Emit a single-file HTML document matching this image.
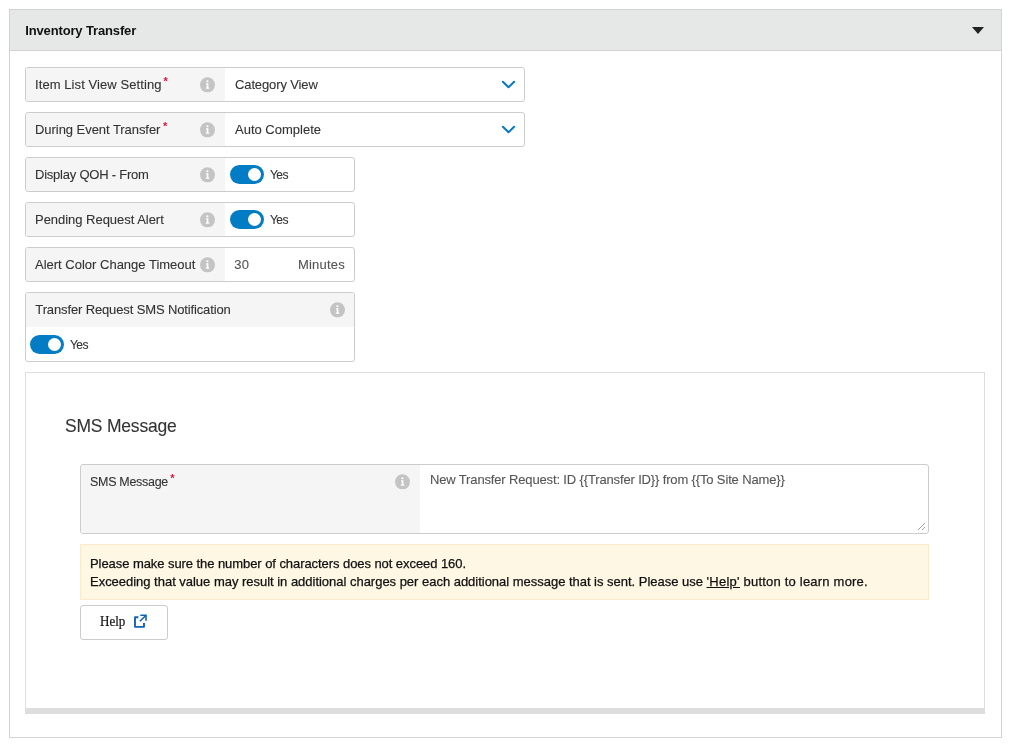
<!DOCTYPE html>
<html lang="en">
<head>
<meta charset="utf-8">
<title>Inventory Transfer</title>
<style>
*{box-sizing:border-box;margin:0;padding:0}
html,body{width:1011px;height:747px;background:#fff;overflow:hidden}
body{will-change:transform;-webkit-text-stroke-width:0.1px;font-family:"Liberation Sans",sans-serif;font-size:13px;color:#333;position:relative}
.panel{position:absolute;left:9px;top:9px;width:993px;height:729px;border:1px solid #d3d3d3;background:#fff}
.phead{position:absolute;left:0;top:0;width:991px;height:41px;background:#e6e8e8;border-bottom:1px solid #d3d3d3}
.phead .t{-webkit-text-stroke-width:0;position:absolute;left:15.2px;top:0;line-height:41px;font-weight:bold;font-size:13px;color:#111;letter-spacing:-0.2px;white-space:nowrap}
.phead .caret{position:absolute;left:962px;top:17px;width:0;height:0;border-left:6.5px solid transparent;border-right:6.5px solid transparent;border-top:7px solid #222}
.f{position:absolute;left:25px;height:35px;border:1px solid #ccc;border-radius:3px;background:#fff;overflow:hidden}
.f .l{position:absolute;left:0;top:0;height:33px;width:199px;background:#f5f5f5;line-height:33px;padding-left:9px;white-space:nowrap;color:#333}
.req{-webkit-text-stroke-width:0;color:#dc143c;font-size:11px;position:relative;top:-4px;left:2px;font-weight:bold}
.info{position:absolute;width:15px;height:15px;overflow:visible}
.v{position:absolute;left:199px;top:0;height:33px;line-height:33px;padding-left:10px;white-space:nowrap;color:#333}
.chev{position:absolute;left:475px;top:12px;width:15px;height:10px}
.tg{position:absolute;width:34px;height:19px;border-radius:10px;background:#027cc4}
.tg i{position:absolute;right:3px;top:3px;width:13px;height:13px;border-radius:50%;background:#fff}
.yes{position:absolute;white-space:nowrap;color:#333}
.inner{position:absolute;left:25px;top:372px;width:960px;height:342px;border:1px solid #dedede;border-bottom:6px solid #ddd;background:#fff}
h2{position:absolute;left:65px;top:412.6px;font-weight:normal;font-size:18.4px;line-height:26px;color:#333;white-space:nowrap}
.note{position:absolute;left:80px;top:544px;width:849px;height:56px;background:#fdf7e4;border:1px solid #fbebcc;box-shadow:inset 0 0 0 1px #fcf8e3;padding:10px 9px 0 9px;line-height:18px;color:#111;white-space:nowrap;-webkit-text-stroke-width:0.25px}
.note u{text-decoration:underline}
.btn{-webkit-text-stroke-width:0;position:absolute;left:80px;top:605px;width:88px;height:35px;border:1px solid #ccc;border-radius:3px;background:#fff;font-family:"Liberation Serif",serif;font-size:13.6px;color:#111}
.btn span{position:absolute;left:19px;top:0;line-height:32px;transform:scaleX(.957);transform-origin:0 50%;-webkit-text-stroke-width:.2px}
.btn svg{position:absolute;left:52px;top:8px;width:16px;height:16px}

#title{letter-spacing:-0.14px}
#l1{letter-spacing:0.08px}
#v1{letter-spacing:-0.12px}
#l3{letter-spacing:-0.23px}
#v5a{letter-spacing:0.3px;margin-left:-.8px}
#v5b{letter-spacing:0.2px}
#l6{letter-spacing:-0.13px;margin-left:.3px}
#l5{margin-left:0;letter-spacing:0px}
#l2{letter-spacing:-0.05px}
#l4{letter-spacing:-0.03px}
#yes3,#yes4,#yes6{display:inline-block;transform:scaleX(.93);transform-origin:0 50%;letter-spacing:-0.7px}
#h2{display:inline-block;transform:scaleX(.95);transform-origin:0 50%;letter-spacing:-0.2px}
#lsms{display:inline-block;transform:scaleX(.96);transform-origin:0 50%;letter-spacing:-0.3px}
#ta{letter-spacing:-0.146px}
#n1{letter-spacing:-0.067px}
#n2a{letter-spacing:-0.02px}
#n2b{letter-spacing:0.28px}
#n2c{letter-spacing:0.21px}
</style>
</head>
<body>
<div class="panel">
  <div class="phead"><span class="t" id="title">Inventory Transfer</span><span class="caret"></span></div>
</div>

<!-- row 1 -->
<div class="f" style="top:67px;width:500px">
  <div class="l"><span id="l1">Item List View Setting</span><span class="req">*</span></div>
  <svg class="info" style="left:174px;top:9px" viewBox="0 -0.35 15 15"><circle cx="7.5" cy="7.5" r="7.5" fill="#c4c4c4"/><circle cx="7.4" cy="3.9" r="1.1" fill="#fff"/><path d="M6 6h2.4v4.2h.9v1.2H5.8v-1.2h.9V7.2H6z" fill="#fff"/></svg>
  <div class="v"><span id="v1">Category View</span></div>
  <svg class="chev" viewBox="0 0 15 10"><path d="M1.9 1.7L7.5 7.3L13.1 1.7" fill="none" stroke="#0579c3" stroke-width="2" stroke-linecap="round" stroke-linejoin="round"/></svg>
</div>

<!-- row 2 -->
<div class="f" style="top:112px;width:500px">
  <div class="l"><span id="l2">During Event Transfer</span><span class="req" style="margin-left:.7px">*</span></div>
  <svg class="info" style="left:174px;top:9px" viewBox="0 -0.35 15 15"><circle cx="7.5" cy="7.5" r="7.5" fill="#c4c4c4"/><circle cx="7.4" cy="3.9" r="1.1" fill="#fff"/><path d="M6 6h2.4v4.2h.9v1.2H5.8v-1.2h.9V7.2H6z" fill="#fff"/></svg>
  <div class="v"><span id="v2">Auto Complete</span></div>
  <svg class="chev" viewBox="0 0 15 10"><path d="M1.9 1.7L7.5 7.3L13.1 1.7" fill="none" stroke="#0579c3" stroke-width="2" stroke-linecap="round" stroke-linejoin="round"/></svg>
</div>

<!-- row 3 -->
<div class="f" style="top:157px;width:330px">
  <div class="l"><span id="l3">Display QOH - From</span></div>
  <svg class="info" style="left:174px;top:9px" viewBox="0 -0.35 15 15"><circle cx="7.5" cy="7.5" r="7.5" fill="#c4c4c4"/><circle cx="7.4" cy="3.9" r="1.1" fill="#fff"/><path d="M6 6h2.4v4.2h.9v1.2H5.8v-1.2h.9V7.2H6z" fill="#fff"/></svg>
  <span class="tg" style="left:204px;top:7px"><i></i></span>
  <span class="yes" style="left:244px;top:0;line-height:33px" id="yes3">Yes</span>
</div>

<!-- row 4 -->
<div class="f" style="top:202px;width:330px">
  <div class="l"><span id="l4">Pending Request Alert</span></div>
  <svg class="info" style="left:174px;top:9px" viewBox="0 -0.35 15 15"><circle cx="7.5" cy="7.5" r="7.5" fill="#c4c4c4"/><circle cx="7.4" cy="3.9" r="1.1" fill="#fff"/><path d="M6 6h2.4v4.2h.9v1.2H5.8v-1.2h.9V7.2H6z" fill="#fff"/></svg>
  <span class="tg" style="left:204px;top:7px"><i></i></span>
  <span class="yes" style="left:244px;top:0;line-height:33px" id="yes4">Yes</span>
</div>

<!-- row 5 -->
<div class="f" style="top:247px;width:330px">
  <div class="l"><span id="l5">Alert Color Change Timeout</span></div>
  <svg class="info" style="left:174px;top:9px" viewBox="0 -0.35 15 15"><circle cx="7.5" cy="7.5" r="7.5" fill="#c4c4c4"/><circle cx="7.4" cy="3.9" r="1.1" fill="#fff"/><path d="M6 6h2.4v4.2h.9v1.2H5.8v-1.2h.9V7.2H6z" fill="#fff"/></svg>
  <div class="v" style="color:#555"><span id="v5a">30</span></div>
  <div class="v" style="left:262px;color:#555"><span id="v5b">Minutes</span></div>
</div>

<!-- row 6 -->
<div class="f" style="top:292px;width:330px;height:70px">
  <div class="l" style="width:328px;height:34px;line-height:33px"><span id="l6">Transfer Request SMS Notification</span></div>
  <svg class="info" style="left:304px;top:9px" viewBox="0 -0.35 15 15"><circle cx="7.5" cy="7.5" r="7.5" fill="#c4c4c4"/><circle cx="7.4" cy="3.9" r="1.1" fill="#fff"/><path d="M6 6h2.4v4.2h.9v1.2H5.8v-1.2h.9V7.2H6z" fill="#fff"/></svg>
  <span class="tg" style="left:4px;top:42px"><i></i></span>
  <span class="yes" style="left:44px;top:35px;line-height:33px" id="yes6">Yes</span>
</div>

<div class="inner"></div>
<h2><span id="h2">SMS Message</span></h2>

<div class="f" style="left:80px;top:464px;width:849px;height:70px">
  <div class="l" style="width:339px;height:68px;line-height:33px"><span id="lsms">SMS Message</span><span class="req" style="margin-left:-3px">*</span></div>
  <svg class="info" style="left:314px;top:9px" viewBox="0 -0.35 15 15"><circle cx="7.5" cy="7.5" r="7.5" fill="#c4c4c4"/><circle cx="7.4" cy="3.9" r="1.1" fill="#fff"/><path d="M6 6h2.4v4.2h.9v1.2H5.8v-1.2h.9V7.2H6z" fill="#fff"/></svg>
  <div class="v" style="left:339px;line-height:29px;color:#555"><span id="ta">New Transfer Request: ID {{Transfer ID}} from {{To Site Name}}</span></div>
  <svg style="position:absolute;left:836px;top:57px;width:10px;height:10px" viewBox="0 0 10 10"><path d="M1 8L8 1M5 8L8 5" stroke="#999" stroke-width="0.9" fill="none"/></svg>
</div>

<div class="note"><span id="n1">Please make sure the number of characters does not exceed 160.</span><br><span id="n2a">Exceeding that value may result in additional charges per each additional message that is sent. Please use</span> <u id="n2b">'Help'</u> <span id="n2c">button to learn more.</span></div>

<div class="btn"><span>Help</span>
  <svg viewBox="0 0 16 16"><path d="M5.4 3.3H2V12.85H11V9" fill="none" stroke="#1561b6" stroke-width="1.9" stroke-linejoin="round" stroke-linecap="butt"/><path d="M7.3 1.25H13V6.7M12.8 1.45L6.9 7.3" fill="none" stroke="#1561b6" stroke-width="1.6" stroke-linecap="butt" stroke-linejoin="miter"/></svg>
</div>
</body>
</html>
